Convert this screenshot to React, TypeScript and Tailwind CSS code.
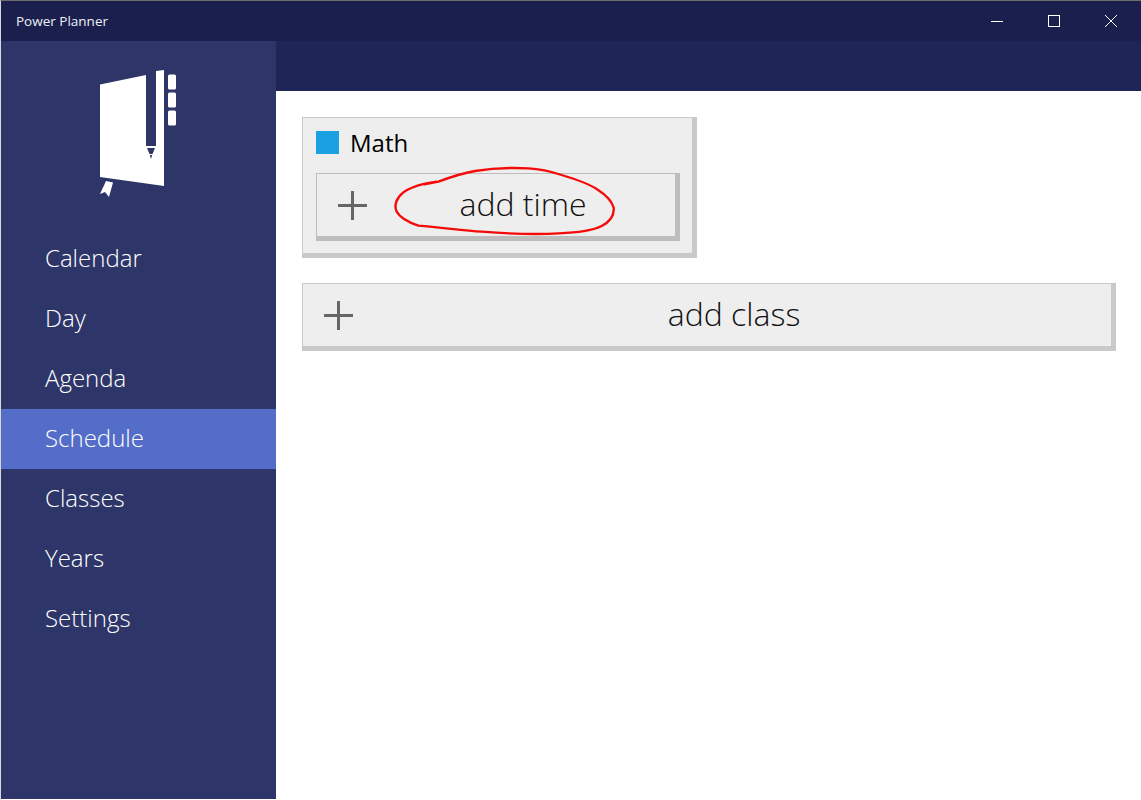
import React from 'react';

const navItems = ['Calendar', 'Day', 'Agenda', 'Schedule', 'Classes', 'Years', 'Settings'];

const Logo = () => (
  <svg width="90" height="132" viewBox="0 0 90 132" className="block">
    {/* coordinates are page px minus (90, 68) */}
    <path d="M10 16.5 L56 7 V78 H66 V3 L74 2 V118 L10 109 Z" fill="#fff" />
    <path d="M56 78 H66 V81 L64.5 81 L61 92 L57.5 81 L56 81 Z" fill="#fff" />
    <path d="M57 80 H65 L62.5 86 H59.5 Z" fill="#2e3669" />
    <path d="M59.8 87 H62.2 L61 91 Z" fill="#2e3669" />
    <rect x="78" y="6.5" width="8" height="15" rx="1.5" fill="#fff" />
    <rect x="78" y="24.5" width="8" height="15" rx="1.5" fill="#fff" />
    <rect x="78" y="42.5" width="8" height="15" rx="1.5" fill="#fff" />
    <path d="M16 113 L23 114.5 L19 129 L15 124 L10 126 Z" fill="#fff" />
  </svg>
);

const Plus = () => (
  <svg width="29" height="29" viewBox="0 0 29 29" className="shrink-0">
    <rect x="0" y="13" width="29" height="3" fill="#666" />
    <rect x="13" y="0" width="3" height="29" fill="#666" />
  </svg>
);

const AddButton = ({ label, className }: { label: string; className: string }) => (
  <button
    className={`flex items-center h-[68px] pl-[21px] bg-[#eeeeee] border-t border-l border-r-[5px] border-b-[5px] ${className}`}
  >
    <Plus />
    <span className="flex-1 ml-[4px] pb-[3px] text-center text-[32px] font-light text-[#111]">{label}</span>
  </button>
);

export default function App() {
  return (
    <div
      className="flex flex-col h-[800px] w-[1141px] overflow-hidden border-t border-l border-t-[#6d6d6d] border-l-[#d8d8d8] bg-white"
      style={{ fontFamily: '"Open Sans", "Noto Sans", sans-serif' }}
    >
      {/* Title bar */}
      <div className="flex items-center justify-between h-10 shrink-0 bg-[#1a1f4e] text-white">
        <span className="pl-[15px] pt-px text-[13.5px] text-[#f0f0f5]">Power Planner</span>
        <div className="flex pr-[2px]">
          <div className="flex items-center justify-center w-[57px] h-10">
            <div className="w-3 h-px bg-white" />
          </div>
          <div className="flex items-center justify-center w-[57px] h-10">
            <div className="w-3 h-3 border border-white" />
          </div>
          <div className="flex items-center justify-center w-[57px] h-10">
            <svg width="12" height="12" viewBox="0 0 12 12">
              <path d="M0 0 L12 12 M12 0 L0 12" stroke="#fff" strokeWidth="1" />
            </svg>
          </div>
        </div>
      </div>

      <div className="flex flex-1 min-h-0">
        {/* Sidebar */}
        <aside className="flex flex-col w-[275px] shrink-0 mb-px bg-[#2e3669]">
          <div className="flex h-[188px] pl-[89px] pt-[27px]">
            <Logo />
          </div>
          <nav className="flex flex-col">
            {navItems.map((item) => (
              <div
                key={item}
                className={`flex items-center h-[60px] pl-[44px] pb-[2px] text-[24px] font-light text-white ${
                  item === 'Schedule' ? 'bg-[#546dc8]' : ''
                }`}
              >
                {item}
              </div>
            ))}
          </nav>
        </aside>

        {/* Content */}
        <main className="flex flex-col flex-1 min-w-0">
          <div className="h-[50px] shrink-0 bg-[#1f2657]" />
          <div className="flex flex-col items-start pt-[26px] pl-[26px] pr-[25px]">
            <section className="relative w-[395px] pt-[13px] px-[13px] pr-[12px] pb-[12px] bg-[#eeeeee] border-t border-l border-r-[5px] border-b-[5px] border-[#c9c9c9]">
              <div className="flex items-center h-[23px]">
                <div className="w-[23px] h-[23px] bg-[#1ba1e2]" />
                <span className="ml-[11px] text-[24px] text-black">Math</span>
              </div>
              <AddButton label="add time" className="w-full mt-[19px] border-[#bdbdbd]" />
              {/* hand-drawn annotation over the button */}
              <svg
                width="420"
                height="180"
                viewBox="0 0 1260 540"
                className="absolute left-[-8px] top-[-33px] pointer-events-none"
                fill="none"
              >
                <path
                  d="M388 298 L430 290 C470 275 500 265 540 258 C600 248 660 248 700 250 C740 252 770 260 800 270 C840 282 880 295 905 312 C930 328 950 345 956 368 C958 390 945 410 920 423 C890 438 850 442 790 445 C720 450 640 446 560 440 C500 435 440 428 370 422 C340 412 315 398 305 380 C296 360 305 338 325 322 C345 308 365 302 390 296 L425 290"
                  stroke="#f50a0a"
                  strokeWidth="7"
                  strokeLinecap="round"
                />
              </svg>
            </section>
            <AddButton label="add class" className="w-[814px] mt-[25px] border-[#c9c9c9]" />
          </div>
        </main>
      </div>
    </div>
  );
}
